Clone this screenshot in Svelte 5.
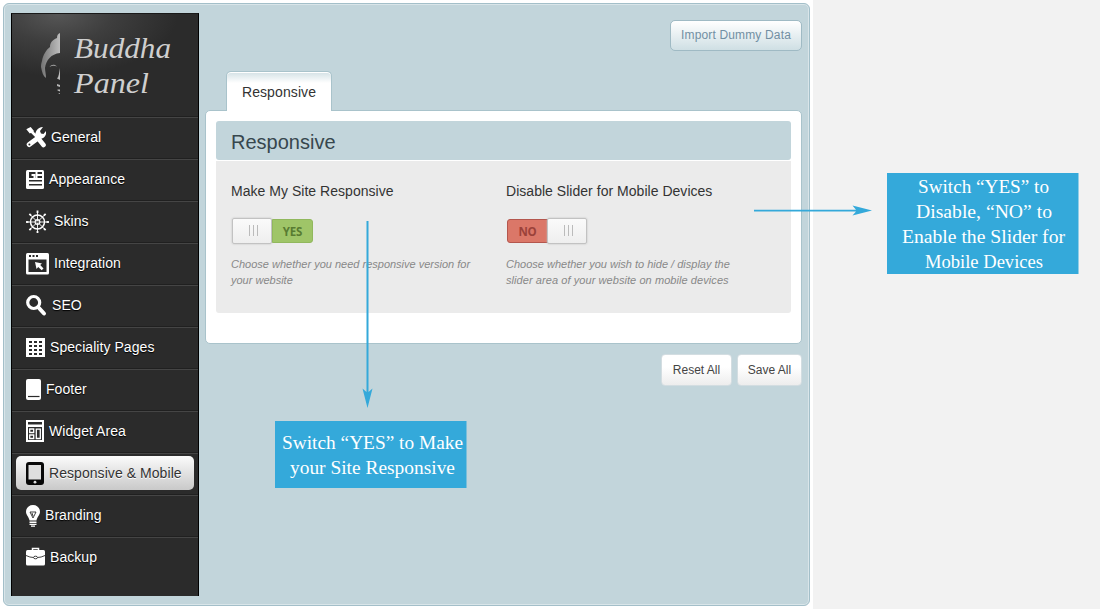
<script>
  const items = [
    { id: 'general', label: 'General', w: 20 },
    { id: 'appearance', label: 'Appearance', w: 18 },
    { id: 'skins', label: 'Skins', w: 23 },
    { id: 'integration', label: 'Integration', w: 23 },
    { id: 'seo', label: 'SEO', w: 21 },
    { id: 'pages', label: 'Speciality Pages', w: 19 },
    { id: 'footer', label: 'Footer', w: 15 },
    { id: 'widget', label: 'Widget Area', w: 18 },
    { id: 'mobile', label: 'Responsive & Mobile', w: 18 },
    { id: 'branding', label: 'Branding', w: 14 },
    { id: 'backup', label: 'Backup', w: 19 }
  ];
  const active = 'mobile';
  const spokes = [0, 45, 90, 135, 180, 225, 270, 315];
</script>

<div class="page">
  <div class="white">
    <div class="admin">
      <aside>
        <div class="logo">
          <svg width="186" height="103" viewBox="0 0 186 103">
            <defs>
              <linearGradient id="silver" gradientUnits="userSpaceOnUse" x1="28" y1="0" x2="48" y2="0">
                <stop offset="0" stop-color="#707070" /><stop offset="1" stop-color="#bdbdbd" />
              </linearGradient>
            </defs>
            <g fill="url(#silver)">
              <path d="M48 19c-2 1-3 2-3 5-5 2-7 5-7 9-4 3-7 8-8 14-1 3-1 4-1 6 1 5 2 9 5 11 0-4-1-7-1-10 1-8 6-14 15-15z" />
              <path d="M37.500 53c2-3 5-3 7.500-.5-2.500-1-5-1-7.500.5zM48 54v12l-3-1.500c2-2 2-6 3-10.500zM45 70l3 1v2l-3-1zM45.500 75.500h2.500v2l-2.500-1zM46 79.500l2-.5v1z" />
            </g>
            <g class="script">
              <text x="62" y="44" font-size="29" textLength="97" lengthAdjust="spacingAndGlyphs">Buddha</text>
              <text x="62" y="79" font-size="29" textLength="75" lengthAdjust="spacingAndGlyphs">Panel</text>
            </g>
          </svg>
        </div>
        <nav>
          {#each items as item}
            <div class="item" class:active={item.id === active}>
              <a>
                <svg width={item.w} height="24" viewBox="0 0 {item.w} 24">
                  {#if item.id === 'general'}
                    <g fill="none" stroke="currentColor" stroke-linecap="round">
                      <path d="M12 13L3.200 19.500" stroke-width="5" />
                      <path d="M4 5l9 9" stroke-width="2.600" />
                      <path d="M1.500 4.500L4.500 3 7 6 4 7.500z" fill="currentColor" stroke-width="1.500" />
                      <path d="M13.500 15l4 5" stroke-width="4.600" />
                    </g>
                    <path fill="currentColor" d="M9 12c0-5 2-9.500 8-10l-3 4 1 2.500 2.500.5L20 6c1 5-3 8.500-8 8z" />
                    <circle cx="3.400" cy="19.400" r="1" fill="#2b2b2b" />
                  {:else if item.id === 'appearance'}
                    <rect y="3" width="18" height="19" rx="1.500" fill="currentColor" />
                    <path fill="#2b2b2b" d="M3 5h6.500v6H3zM11.500 5H16v2h-4.500zM11.500 9H16v2h-4.500zM3 13h13v1.500H3zM3 17h13v1.500H3z" />
                    <path fill="currentColor" d="M5.500 7h4v4H7.500V9h-2z" />
                  {:else if item.id === 'skins'}
                    <g fill="none" stroke="currentColor">
                      <circle cx="11.500" cy="13" r="7" stroke-width="1.500" />
                      <circle cx="11.500" cy="13" r="2.400" stroke-width="1.100" />
                      {#each spokes as a}
                        <g transform="rotate({a} 11.5 13)">
                          <path d="M11.500 12V2" stroke-width=".9" /><path d="M11.500 4V1.500" stroke-width="1.800" />
                        </g>
                      {/each}
                    </g>
                  {:else if item.id === 'integration'}
                    <rect y="2" width="23" height="21.500" rx="1.500" fill="currentColor" />
                    <path fill="#2b2b2b" d="M3 4h2v2H3zM6.500 4h2v2h-2zM10 4h2v2h-2zM2.500 8.500h18v12.500h-18z" />
                    <path fill="currentColor" d="M9 11l7 1.500-1.800 1.500 3.300 3.500-1.800 1.800-3.500-3.300-1.700 2z" />
                  {:else if item.id === 'seo'}
                    <circle cx="7.700" cy="9.500" r="6" fill="none" stroke="currentColor" stroke-width="3.200" />
                    <path d="M12.500 14.500l5.500 6" stroke="currentColor" stroke-width="4" stroke-linecap="round" />
                  {:else if item.id === 'pages'}
                    <rect y="3" width="19" height="19" fill="currentColor" />
                    {#each [6, 10, 14, 18] as y}
                      <path fill="#2b2b2b" d="M3 {y}h3v2H3zM8 {y}h3v2H8zM13 {y}h3v2h-3z" />
                    {/each}
                  {:else if item.id === 'footer'}
                    <rect y="2" width="15" height="21" rx="2" fill="currentColor" />
                    <path d="M2 19.500h11.500" stroke="#2b2b2b" stroke-width="1.200" />
                  {:else if item.id === 'widget'}
                    <path fill="currentColor" fill-rule="evenodd" d="M0 1h18v22H0zM2 3h14v2.500H2zM2 8h14v13H2z" />
                    <path fill="none" stroke="currentColor" stroke-width="1.300" d="M3.700 10h4v3.500h-4zM3.700 16h4v3.500h-4zM10.300 10.200h4v9.300h-4z" />
                  {:else if item.id === 'mobile'}
                    <rect y="1" width="18" height="23" rx="3" fill="#080808" />
                    <rect x="2.500" y="4" width="12.500" height="14.500" fill="#dedede" />
                    <circle cx="9" cy="21.200" r="1.400" fill="#ddd" />
                  {:else if item.id === 'branding'}
                    <path fill="currentColor" d="M7 2c4 0 7 2.800 7 6.700 0 3.300-3 5.300-3.500 8.800h-7C3 14 0 12 0 8.700 0 4.800 3 2 7 2zM3.500 18.500h7V20h-7zM3.500 20.700h7v1.200h-7zM5 22.500h4v1.300H5z" />
                    <path d="M4 9h6l-3 6zM6 10l1 3" fill="none" stroke="#2b2b2b" stroke-width=".9" />
                  {:else}
                    <path d="M6.500 6V3.500h6V6" fill="none" stroke="currentColor" stroke-width="1.500" />
                    <rect y="5" width="19" height="15.500" rx="1.500" fill="currentColor" />
                    <path d="M0 10.500Q4 12.500 7.500 12.500M11.500 12.500Q15 12.500 19 10.500" fill="none" stroke="#2b2b2b" stroke-width=".9" />
                    <ellipse cx="9.500" cy="12.500" rx="2" ry="1.300" fill="none" stroke="#2b2b2b" stroke-width=".9" />
                  {/if}
                </svg>
                <span>{item.label}</span>
              </a>
            </div>
          {/each}
        </nav>
      </aside>

      <main>
        <header><button class="import">Import Dummy Data</button></header>
        <div class="tabs"><div class="tab">Responsive</div></div>
        <section class="panel">
          <h2>Responsive</h2>
          <div class="options">
            <div class="option">
              <h3>Make My Site Responsive</h3>
              <div class="switch yes"><i class="knob"></i><b>YES</b></div>
              <p>Choose whether you need responsive version for<br />your website</p>
            </div>
            <div class="option second">
              <h3>Disable Slider for Mobile Devices</h3>
              <div class="switch no"><b>NO</b><i class="knob"></i></div>
              <p>Choose whether you wish to hide / display the<br /><span class="wide">slider area of your website on mobile devices</span></p>
            </div>
          </div>
        </section>
        <div class="actions"><button>Reset All</button><button class="save">Save All</button></div>
      </main>
    </div>
  </div>

  <svg class="notes" width="1100" height="609" viewBox="0 0 1100 609">
    <g fill="#34a9da">
      <path d="M366.500 221h2v171l4-3.500-5 19.500-5-19.500 4 3.500z" />
      <path d="M754 209.700h102l-3.500-4.200 19.500 5-19.500 5 3.500-4H754z" />
      <path d="M275 421h191.500v67H275zM887 173h191.500v101H887z" />
    </g>
    <g class="note">
      <text x="282" y="449" textLength="181" lengthAdjust="spacingAndGlyphs">Switch “YES” to Make</text>
      <text x="290" y="474" textLength="165" lengthAdjust="spacingAndGlyphs">your Site Responsive</text>
      <text x="918" y="193" textLength="131" lengthAdjust="spacingAndGlyphs">Switch “YES” to</text>
      <text x="916" y="218" textLength="136" lengthAdjust="spacingAndGlyphs">Disable, “NO” to</text>
      <text x="902" y="243" textLength="163" lengthAdjust="spacingAndGlyphs">Enable the Slider for</text>
      <text x="925" y="268" textLength="118" lengthAdjust="spacingAndGlyphs">Mobile Devices</text>
    </g>
  </svg>
</div>

<style>
  :global(body) { background: #f2f2f2; }
  .page {
    position: relative;
    width: 1100px;
    height: 609px;
    overflow: hidden;
    font-family: "Liberation Sans", Arial, sans-serif;
  }
  .white { box-sizing: border-box; width: 813px; height: 609px; padding: 3px; background: #fff; }
  .admin {
    box-sizing: border-box;
    display: flex;
    width: 807px;
    height: 603px;
    padding: 9px 7px 8px 7px;
    border: 1px solid #a3bfc9;
    border-radius: 6px;
    background: #c2d5db;
    box-shadow: inset 0 0 0 1px #d9e5e9;
  }
  aside {
    box-sizing: border-box;
    flex: none;
    width: 188px;
    height: 583px;
    border: 1px solid #000;
    border-bottom: 0;
    border-top-color: #1a1a1a;
    background: radial-gradient(ellipse 120px 62px at 46px 0, #565656 0, rgba(75, 75, 75, .6) 45%, rgba(43, 43, 43, 0) 100%), #2b2b2b;
  }
  .logo { height: 103px; border-bottom: 1px solid #202020; box-sizing: border-box; }
  .logo svg { display: block; }
  .script { font-family: "Liberation Serif", serif; font-style: italic; fill: #cfcfcf; }
  .item {
    box-sizing: border-box;
    height: 42px;
    padding: 2px 4px 0;
    border-top: 1px solid #454545;
    border-bottom: 1px solid #202020;
  }
  .item:last-child { border-bottom: 0; }
  a {
    box-sizing: border-box;
    display: flex;
    align-items: center;
    gap: 5px;
    height: 34px;
    padding-left: 10px;
    border-radius: 5px;
    color: #fff;
    font-size: 14px;
    letter-spacing: .06px;
    white-space: nowrap;
    text-shadow: 0 1px 1px #000;
  }
  a svg { display: block; flex: none; }
  .active a {
    background: linear-gradient(#fbfbfb, #c9c9c9);
    color: #333;
    text-shadow: 0 1px 0 #fff;
  }
  main { width: 596px; margin-left: 7px; }
  header { display: flex; justify-content: flex-end; padding-top: 7px; height: 51px; }
  button {
    box-sizing: border-box;
    height: 32px;
    width: 71px;
    padding: 0;
    border: 1px solid #d3dde1;
    border-radius: 4px;
    background: linear-gradient(#fff 40%, #ededed);
    color: #444;
    font: 12px "Liberation Sans", Arial, sans-serif;
  }
  .save { width: 65px; }
  .import {
    width: 132px;
    height: 31px;
    padding-bottom: 2px;
    border-color: #9fbac4;
    border-radius: 5px;
    background: linear-gradient(#fff, #cfdfe4);
    color: #728fa3;
    letter-spacing: .15px;
  }
  .tabs { display: flex; height: 39px; padding-left: 20px; }
  .tab {
    box-sizing: border-box;
    width: 106px;
    height: 40px;
    position: relative;
    border: 1px solid #a9c3cb;
    border-bottom: 0;
    border-radius: 5px 5px 0 0;
    background: linear-gradient(#d3e1e5, #fff 11px);
    box-shadow: inset 0 1px 0 #fff;
    color: #333;
    font-size: 14px;
    letter-spacing: .1px;
    line-height: 41px;
    text-align: center;
  }
  .panel {
    box-sizing: border-box;
    height: 234px;
    margin-left: -1px;
    padding: 10px 10px 0 10px;
    border: 1px solid #a9c3cb;
    border-radius: 5px;
    background: #fff;
  }
  h2 {
    height: 39px;
    margin: 0 0 1px;
    padding-left: 15px;
    border-radius: 3px;
    background: #c2d5db;
    color: #37474e;
    font-size: 20px;
    font-weight: 400;
    line-height: 42px;
  }
  .options { display: flex; height: 152px; border-radius: 0 0 3px 3px; background: #ebebeb; }
  .option { width: 260px; padding-left: 15px; }
  h3 { margin: 22px 0 17px; color: #333; font-size: 14px; font-weight: 400; line-height: 17px; white-space: nowrap; letter-spacing: .03px; }
  .switch { display: flex; align-items: center; width: 82px; height: 27px; padding-left: 1px; }
  .switch b {
    box-sizing: border-box;
    width: 41px;
    height: 24px;
    border: 1px solid #91b85d;
    border-radius: 0 3px 3px 0;
    background: #9fc568;
    color: #587c32;
    font: 700 11.500px/23px "Open Sans", sans-serif;
    letter-spacing: -.2px;
    text-align: center;
  }
  .no b { border-color: #b4564d; border-radius: 3px 0 0 3px; background: #db7768; color: #9b423a; }
  .knob {
    box-sizing: border-box;
    display: flex;
    align-items: center;
    justify-content: center;
    width: 40px;
    height: 26px;
    border: 1px solid #c2c2c2;
    border-radius: 2px;
    background: linear-gradient(#fafafa, #eee);
    box-shadow: 0 0 2px #bbb;
  }
  .no .knob { margin-left: -1px; }
  .knob::before { content: ""; width: 9px; height: 11px; margin-left: 2px; background: repeating-linear-gradient(90deg, #bbb 0 1px, transparent 1px 4px); }
  p { margin: 12px 0 0; color: #888; font-size: 11px; font-style: italic; line-height: 16px; white-space: nowrap; }
  .wide { letter-spacing: .07px; }
  .actions { display: flex; justify-content: flex-end; gap: 5px; padding-top: 10px; }
  .notes { position: absolute; left: 0; top: 0; pointer-events: none; }
  .note { fill: #fff; font-family: "Liberation Serif", serif; font-size: 19.500px; }
</style>
